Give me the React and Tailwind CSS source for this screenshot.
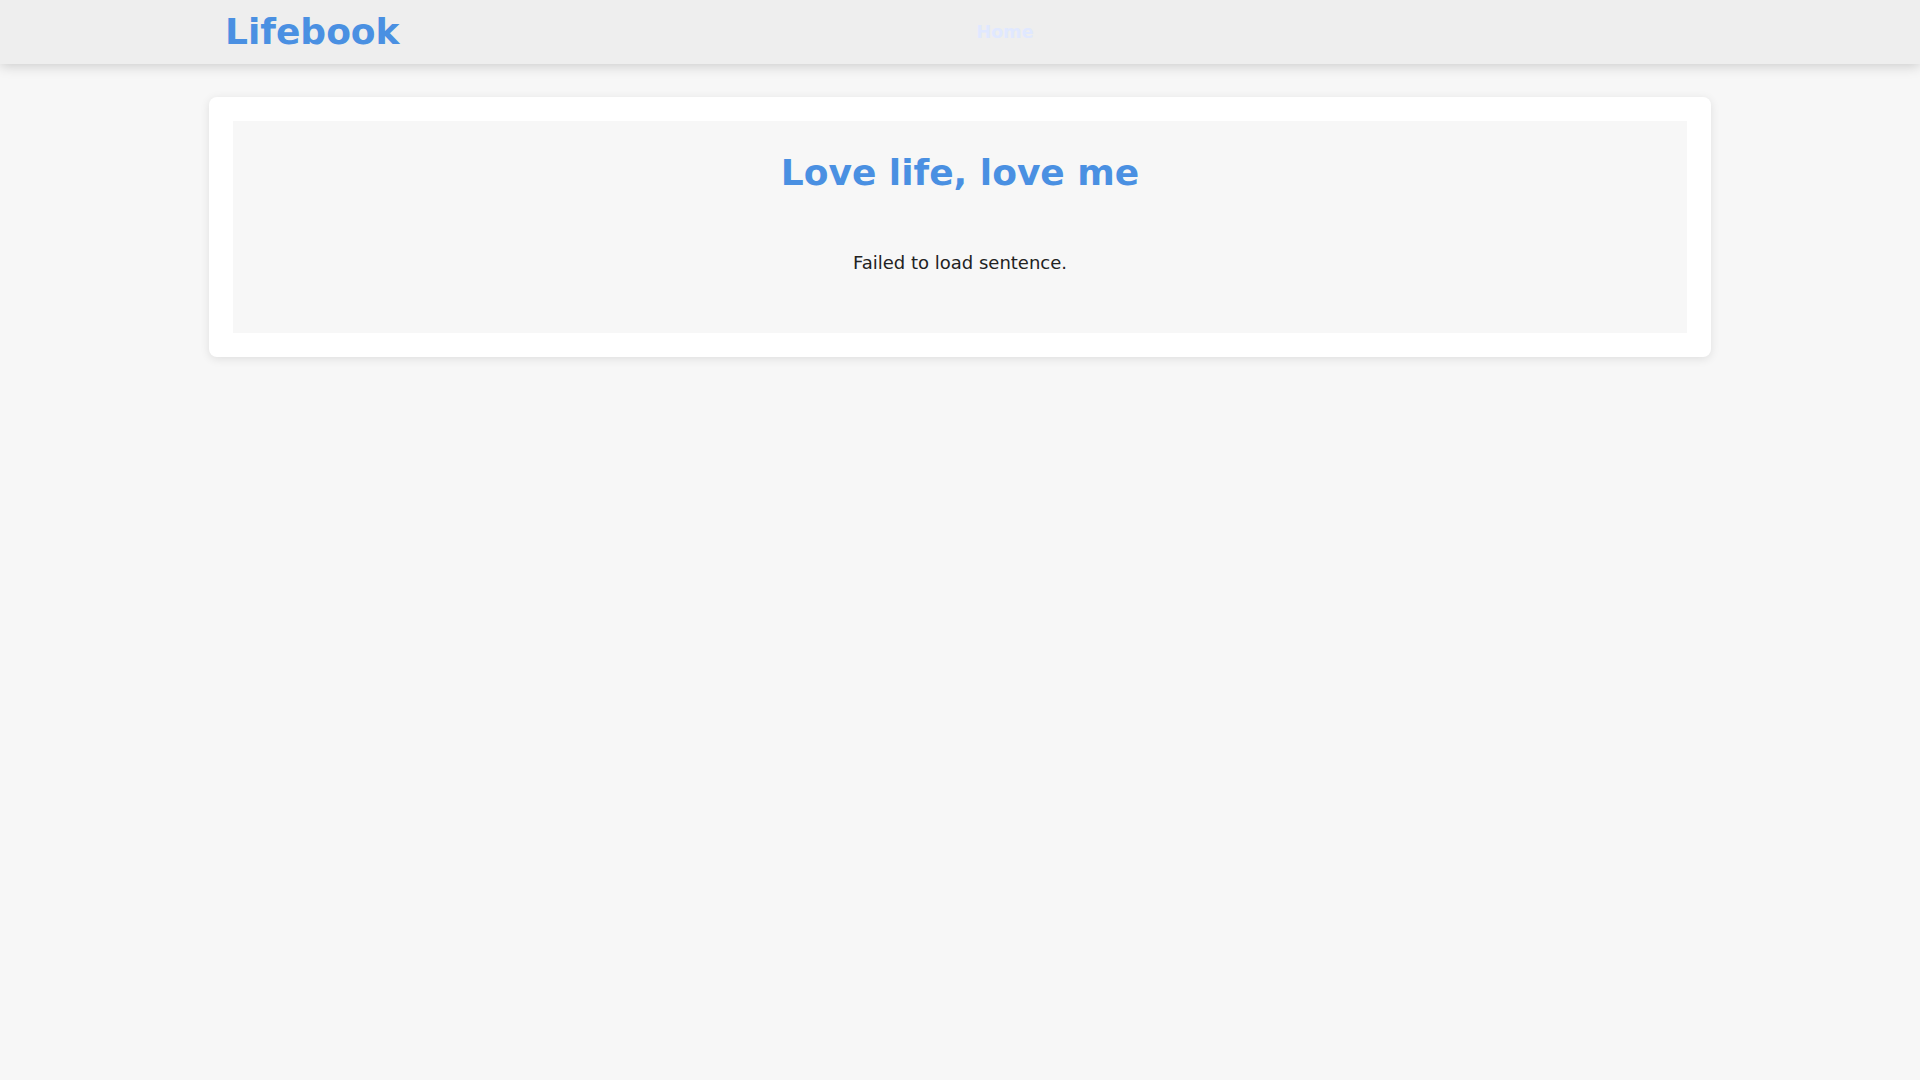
const App = () => (
  <div className="min-h-screen bg-[#f7f7f7] font-['DejaVu_Sans',sans-serif]">
    {/* Navbar */}
    <header className="relative z-10 h-16 bg-[#eeeeee] shadow-[0_2px_12px_rgba(0,0,0,0.18)]">
      <nav className="mx-auto flex h-full max-w-[1500px] items-center px-[15px]">
        <a href="#" className="text-[36px] font-bold leading-[42px] text-[#4a90e2]">
          Lifebook
        </a>
        <a href="#" className="ml-[577px] text-[17.6px] font-bold leading-[21px] text-[#e0e8ff]">
          Home
        </a>
      </nav>
    </header>

    {/* Content */}
    <main className="mx-auto mt-[33px] max-w-[1502px]">
      <div className="rounded-lg bg-white p-6 shadow-[0_2px_10px_rgba(0,0,0,0.1)]">
        <div className="bg-[#f7f7f7] pt-[31px] pb-[60px] text-center">
          <h1 className="text-[36px] font-bold leading-[42px] text-[#4a90e2]">
            Love life, love me
          </h1>
          <p className="mt-[58px] text-[18px] leading-[21px] text-[#222222]">
            Failed to load sentence.
          </p>
        </div>
      </div>
    </main>
  </div>
);

export default App;
